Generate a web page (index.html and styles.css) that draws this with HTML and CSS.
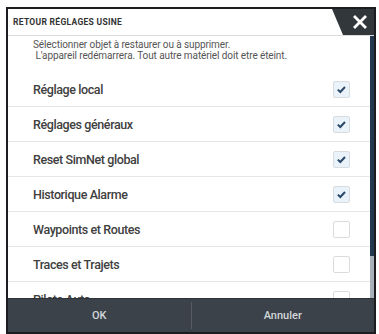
FILE: index.html
```html
<!DOCTYPE html>
<html lang="fr">
<head>
    <meta charset="UTF-8">
    <meta name="viewport" content="width=device-width, initial-scale=1.0">
    <title>Retour réglages usine</title>
    <link rel="stylesheet" href="styles.css">
</head>
<body>
    <div class="dialog">
        <div class="dialog-header">
            <span class="dialog-title">RETOUR RÉGLAGES USINE</span>
            <div class="close-btn">
                <svg width="14" height="14" viewBox="0 0 14 14">
                    <path d="M2 2 L12 12 M12 2 L2 12" stroke="#fff" stroke-width="2.8" stroke-linecap="square"/>
                </svg>
            </div>
        </div>

        <div class="dialog-body">
            <div class="list">
                <p class="info">Sélectionner objet à restaurer ou à supprimer.<br>&nbsp;L'appareil redémarrera. Tout autre matériel doit etre éteint.</p>

                <div class="row"><span>Réglage local</span><span class="check on"></span></div>
                <div class="row"><span>Réglages généraux</span><span class="check on"></span></div>
                <div class="row"><span>Reset SimNet global</span><span class="check on"></span></div>
                <div class="row"><span>Historique Alarme</span><span class="check on"></span></div>
                <div class="row"><span>Waypoints et Routes</span><span class="check"></span></div>
                <div class="row"><span>Traces et Trajets</span><span class="check"></span></div>
                <div class="row"><span>Pilote Auto</span><span class="check"></span></div>
            </div>
            <div class="scrollbar"><div class="thumb"></div></div>
        </div>

        <div class="dialog-footer">
            <div class="footer-btn">OK</div>
            <div class="footer-btn">Annuler</div>
        </div>
    </div>
</body>
</html>
```

FILE: styles.css
```css
body {
    margin: 0;
    background: #fff;
    font-family: Roboto, "Liberation Sans", sans-serif;
}
.dialog {
    margin: 7px 0 0 6px;
    width: 370px;
    height: 327px;
    box-sizing: border-box;
    border: 2px solid #1c1d20;
    display: flex;
    flex-direction: column;
    overflow: hidden;
    background: #fff;
}
.dialog-header {
    height: 26px;
    flex-shrink: 0;
    display: flex;
    align-items: center;
    justify-content: space-between;
    border-bottom: 1px solid #dcdcdc;
}
.dialog-title {
    padding-left: 5px;
    font-size: 8.5px;
    font-weight: 700;
    color: #333;
    letter-spacing: 0.3px;
}
.close-btn {
    width: 42px;
    height: 26px;
    background: #32373c;
    clip-path: polygon(0 0, 100% 0, 100% 100%, 11px 100%);
    display: flex;
    align-items: center;
    justify-content: flex-end;
    padding-right: 7px;
    box-sizing: border-box;
}
.dialog-body {
    flex: 1;
    display: flex;
    overflow: hidden;
}
.list { flex: 1; }
.info {
    margin: 0;
    padding: 3px 0 11px 25px;
    font-size: 10px;
    line-height: 11px;
    color: #555;
    letter-spacing: -0.1px;
}
.row {
    height: 35px;
    box-sizing: border-box;
    border-bottom: 1px solid #e6e6e6;
    display: flex;
    align-items: center;
    justify-content: space-between;
    padding: 0 20px 0 25px;
    font-size: 12.5px;
    font-weight: 500;
    color: #404040;
    letter-spacing: -0.4px;
}
.check {
    width: 17px;
    height: 17px;
    box-sizing: border-box;
    border: 1px solid #d9dcdf;
    border-radius: 2px;
    background: #fff;
}
.check.on {
    background: #eaf3f9 url("data:image/svg+xml,%3Csvg xmlns='http://www.w3.org/2000/svg' width='17' height='17'%3E%3Cpath d='M4.8 8.6 L7.3 11 L12 6' fill='none' stroke='%232b4869' stroke-width='2'/%3E%3C/svg%3E") center no-repeat;
}
.scrollbar {
    width: 4px;
    background: #a9b2ba;
}
.thumb {
    height: 220px;
    background: #23394f;
}
.dialog-footer {
    height: 34px;
    flex-shrink: 0;
    display: flex;
    background: #3c4249;
    border-top: 1px solid #2e3237;
    box-sizing: border-box;
}
.footer-btn {
    flex: 1;
    display: flex;
    align-items: center;
    justify-content: center;
    color: #d3d7db;
    font-size: 11px;
    font-weight: 500;
}
.footer-btn + .footer-btn {
    border-left: 1px solid #575c63;
    margin: 3px 0;
}
```
